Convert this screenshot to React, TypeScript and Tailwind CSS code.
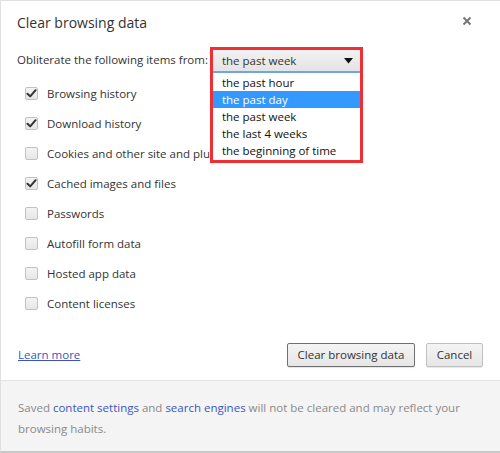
import React from 'react';

const ITEMS: Array<{ label: string; checked: boolean }> = [
  { label: 'Browsing history', checked: true },
  { label: 'Download history', checked: true },
  { label: 'Cookies and other site and plugin data', checked: false },
  { label: 'Cached images and files', checked: true },
  { label: 'Passwords', checked: false },
  { label: 'Autofill form data', checked: false },
  { label: 'Hosted app data', checked: false },
  { label: 'Content licenses', checked: false },
];

const PERIODS = ['the past hour', 'the past day', 'the past week', 'the last 4 weeks', 'the beginning of time'];

const Checkbox: React.FC<{ checked: boolean }> = ({ checked }) => (
  <span className="flex h-[13px] w-[13px] shrink-0 items-center justify-center rounded-[2px] border border-[#c2c2c2] bg-gradient-to-b from-[#f4f4f4] to-[#e6e6e6]">
    {checked ? (
      <svg width="11" height="11" viewBox="0 0 11 11">
        <path d="M1.5 5.8 L4.2 8.4 L9.6 2.2" fill="none" stroke="#333" strokeWidth="2" strokeLinecap="round" strokeLinejoin="round" />
      </svg>
    ) : null}
  </span>
);

export default function App() {
  return (
    <div
      className="flex h-[453px] w-[500px] flex-col overflow-hidden border-t border-l border-b-2 border-[#e0e0e0] border-b-[#c8c8c8] bg-white text-[11.5px] text-[#333]"
      style={{ fontFamily: '"Open Sans", "Noto Sans", sans-serif' }}
    >
      <div className="relative flex-1 px-[16px]">
        <div className="flex items-center justify-between pt-[11px]">
          <h1 className="text-[14px] leading-[22px] text-[#333]">Clear browsing data</h1>
          <svg width="10" height="10" viewBox="0 0 10 10" className="mr-[12px] mt-[-4px]">
            <path d="M1.5 1.5 L8.5 8.5 M8.5 1.5 L1.5 8.5" stroke="#777" strokeWidth="2" />
          </svg>
        </div>

        <div className="mt-[13px] flex items-center">
          <span className="leading-[22px]">Obliterate the following items from:</span>
          <div className="relative z-10 ml-[2px]">
            <div className="border-[3px] border-b-0 border-[#ee3035] bg-white">
              <div className="flex h-[23px] w-[147px] items-center justify-between border-b-2 border-[#6fa3ef] bg-gradient-to-b from-[#f2f2f2] to-[#e4e4e4] pl-[9px] pr-[7px]">
                <span>the past week</span>
                <svg width="9" height="6" viewBox="0 0 9 6">
                  <path d="M0 0 H9 L4.5 5.5 Z" fill="#111" />
                </svg>
              </div>
            </div>
            <ul className="absolute top-full left-0 w-full border-[3px] border-t-0 border-[#ee3035] bg-white pt-[1px] pb-[1px]">
              {PERIODS.map((p) => (
                <li
                  key={p}
                  className={`h-[17px] pl-[9px] leading-[17px] ${p === 'the past day' ? 'bg-[#3399ff] text-white' : 'text-[#111]'}`}
                >
                  {p}
                </li>
              ))}
            </ul>
          </div>
        </div>

        <ul className="absolute top-[85px] left-[24px] flex flex-col gap-[15px]">
          {ITEMS.map((item) => (
            <li key={item.label} className="flex h-[15px] items-center gap-[9px]">
              <Checkbox checked={item.checked} />
              <span className="leading-[15px]">{item.label}</span>
            </li>
          ))}
        </ul>

        <div className="absolute top-[342px] right-[17px] left-[17px] flex items-center justify-between">
          <a href="#" className="text-[#3b55c7] underline">Learn more</a>
          <div className="flex gap-[11px]">
            <button type="button" className="h-[24px] w-[128px] rounded-[2px] border border-[#707070] bg-gradient-to-b from-[#f4f4f4] to-[#e6e6e6] text-[#333] shadow-[0_1px_1px_rgba(0,0,0,0.1)]">
              Clear browsing data
            </button>
            <button type="button" className="h-[24px] w-[57px] rounded-[2px] border border-[#c0c0c0] bg-gradient-to-b from-[#f4f4f4] to-[#e6e6e6] text-[#333] shadow-[0_1px_1px_rgba(0,0,0,0.1)]">
              Cancel
            </button>
          </div>
        </div>
      </div>

      <div className="h-[71px] border-t border-[#e4e4e4] bg-[#f4f4f4] px-[17px] pt-[16px] leading-[21px] text-[#8a8a8a]">
        <p>
          Saved <a href="#" className="text-[#3b55c7]">content settings</a> and{' '}
          <a href="#" className="text-[#3b55c7]">search engines</a> will not be cleared and may reflect your browsing habits.
        </p>
      </div>
    </div>
  );
}
